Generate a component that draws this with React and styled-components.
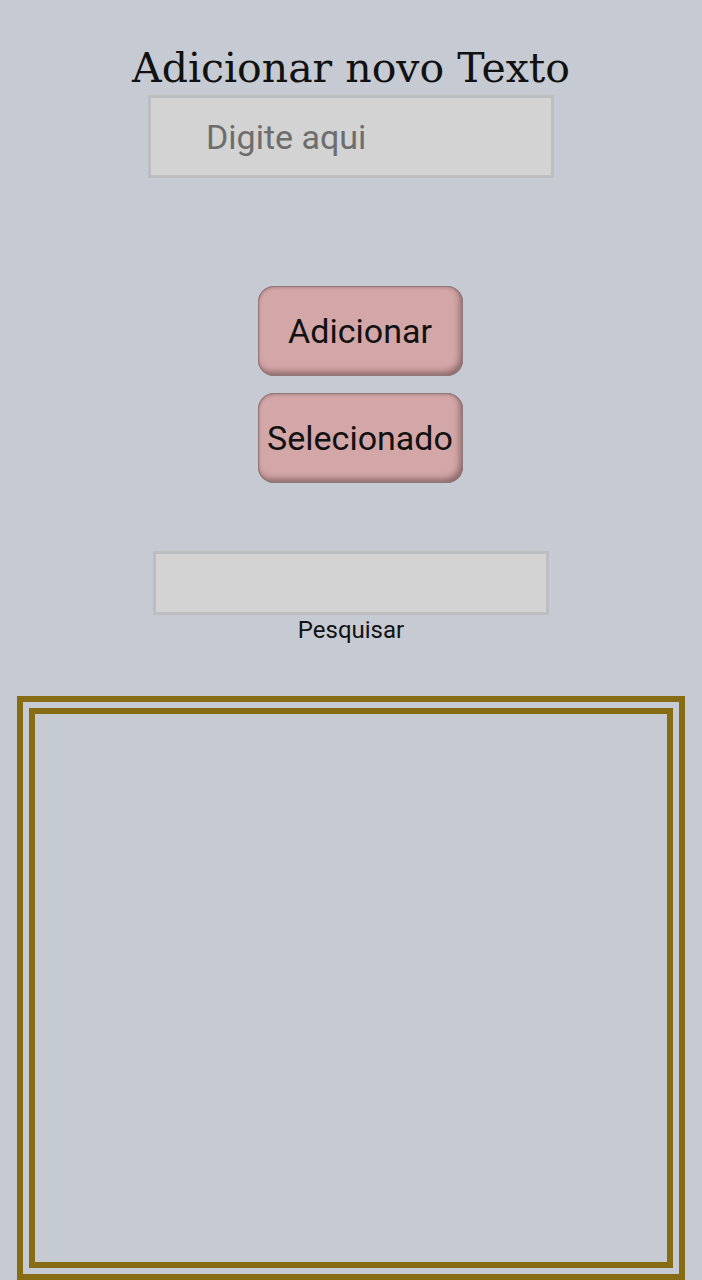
import React from "react";
import styled, { createGlobalStyle } from "styled-components";

const Global = createGlobalStyle`
  html, body { margin: 0; padding: 0; background: #c6cad2; }
  body { font-family: Roboto, "Noto Sans", sans-serif; }
`;

const Page = styled.div`
  width: 702px;
  height: 1280px;
  overflow: hidden;
  display: flex;
  flex-direction: column;
  align-items: center;
  background: #c6cad2;
`;

const Title = styled.h1`
  margin: 42px 0 0;
  font-family: "DejaVu Serif", "Noto Serif", serif;
  font-weight: 400;
  font-size: 41px;
  line-height: 52px;
  color: #111;
  height: 52px;
`;

const TextInput = styled.input`
  box-sizing: border-box;
  width: ${(p) => p.$w}px;
  height: ${(p) => p.$h}px;
  margin-top: ${(p) => p.$mt}px;
  background: #d3d3d3;
  border: 3px solid #bdbebf;
  outline: none;
  padding: 0 0 0 ${(p) => p.$pl}px;
  font-family: Roboto, sans-serif;
  font-size: 34px;
  color: #222;
  &::placeholder { color: #6d6d6d; }
`;

const Buttons = styled.div`
  display: flex;
  flex-direction: column;
  gap: 17px;
  margin: 108px 0 0 18px;
`;

const Button = styled.button`
  box-sizing: border-box;
  width: 205px;
  height: 90px;
  border: none;
  border-radius: 16px;
  background: #d3a6a7;
  box-shadow: inset 0 0 0 1px #8f7878, inset -3px -4px 6px rgba(70, 40, 40, 0.5),
    inset 1px 2px 3px rgba(70, 40, 40, 0.2);
  font-family: Roboto, sans-serif;
  font-size: 34px;
  color: #111;
  padding: 0;
`;

const Label = styled.div`
  font-family: Roboto, sans-serif;
  font-size: 24px;
  line-height: 30px;
  color: #111;
`;

const Frame = styled.div`
  box-sizing: border-box;
  width: 668px;
  height: 584px;
  margin-top: 51px;
  border: 18px double #876c13;
  flex-shrink: 0;
`;

export default function App() {
  return (
    <>
      <Global />
      <Page>
        <Title>Adicionar novo Texto</Title>
        <TextInput $w={406} $h={84} $mt={1} $pl={55} placeholder="Digite aqui" />
        <Buttons>
          <Button>Adicionar</Button>
          <Button>Selecionado</Button>
        </Buttons>
        <TextInput $w={396} $h={64} $mt={68} $pl={10} />
        <Label>Pesquisar</Label>
        <Frame />
      </Page>
    </>
  );
}
